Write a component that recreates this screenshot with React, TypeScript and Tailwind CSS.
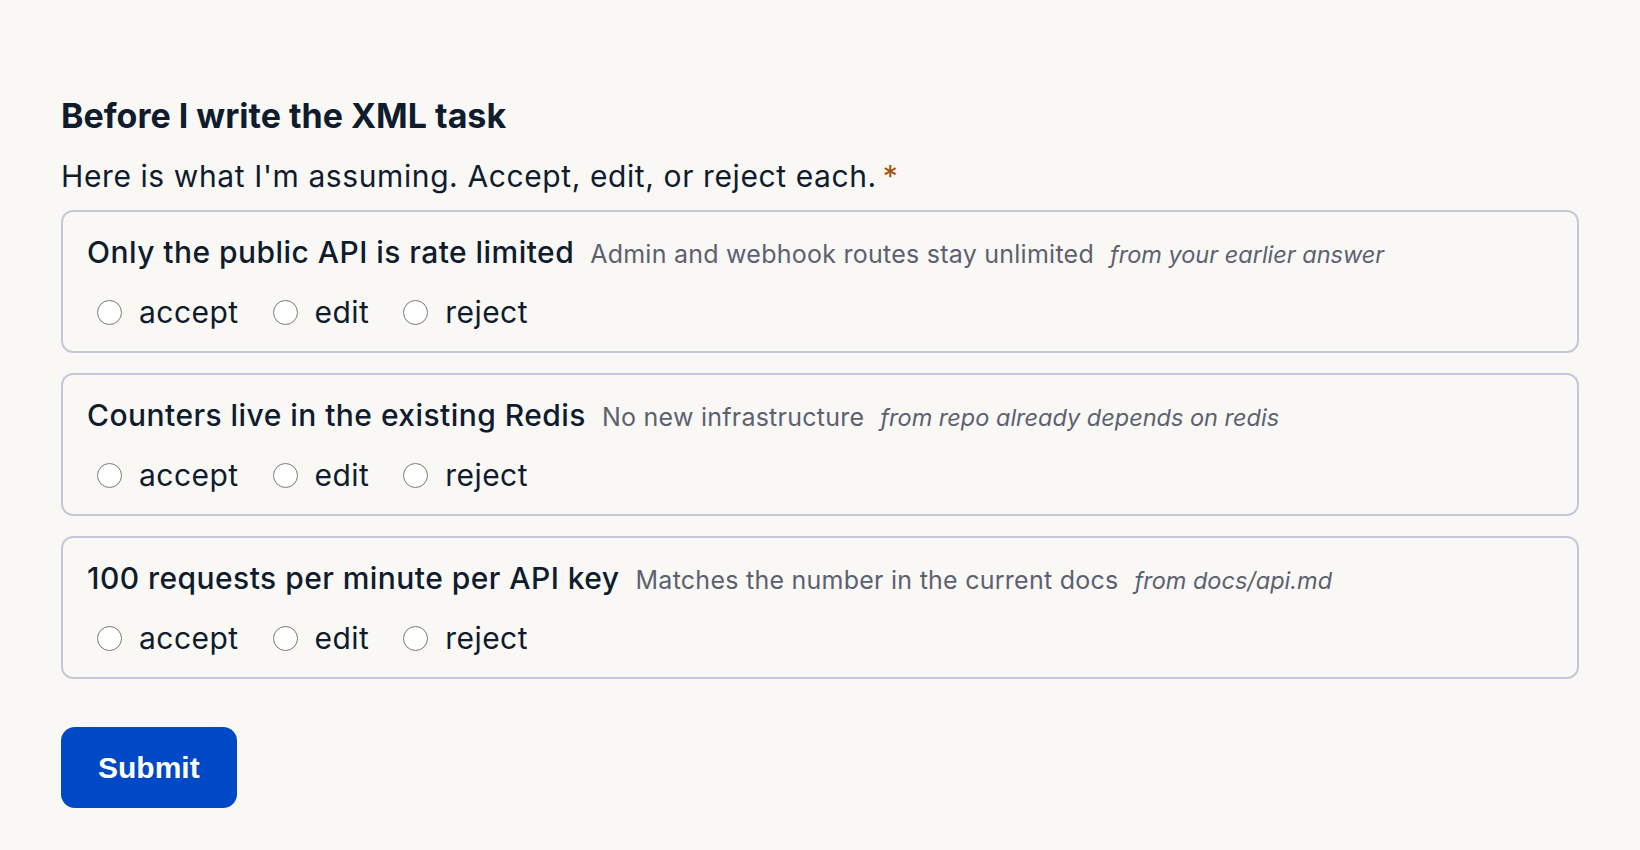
import { useState } from 'react'

type Choice = 'accept' | 'edit' | 'reject'

const ASSUMPTIONS = [
  {
    id: 'scope',
    title: 'Only the public API is rate limited',
    detail: 'Admin and webhook routes stay unlimited',
    source: 'from your earlier answer',
  },
  {
    id: 'store',
    title: 'Counters live in the existing Redis',
    detail: 'No new infrastructure',
    source: 'from repo already depends on redis',
  },
  {
    id: 'limit',
    title: '100 requests per minute per API key',
    detail: 'Matches the number in the current docs',
    source: 'from docs/api.md',
  },
]

const CHOICES: Choice[] = ['accept', 'edit', 'reject']

function Radio({ checked }: { checked: boolean }) {
  return (
    <span className="flex h-[25px] w-[25px] shrink-0 items-center justify-center rounded-full border-[1.5px] border-[#7a7a7a] bg-white">
      {checked && <span className="h-[13px] w-[13px] rounded-full bg-[#0049c6]" />}
    </span>
  )
}

export default function App() {
  const [answers, setAnswers] = useState<Record<string, Choice | undefined>>({})

  return (
    <div
      className="min-h-screen bg-[#f9f8f5] pl-[61px] pr-[61px] pt-[96px] text-[#0f1c2e]"
      style={{ fontFamily: 'Inter, "Noto Sans", sans-serif' }}
    >
      <h2 className="text-[34px] font-bold leading-[40px]">Before I write the XML task</h2>
      <p className="mt-[22px] text-[30px] leading-[36px] tracking-[0.02em]">
        Here is what I'm assuming. Accept, edit, or reject each.
        <span className="ml-[6px] text-[#a8520f]">*</span>
      </p>

      <div className="mt-[16px] flex flex-col gap-[20px]">
        {ASSUMPTIONS.map((a) => (
          <div
            key={a.id}
            className="rounded-[12px] border-2 border-[#c6c8d9] px-[24px] pb-[21px] pt-[22px]"
          >
            <div className="flex h-[36px] items-baseline gap-4 whitespace-nowrap">
              <span className="text-[30px] font-medium leading-[36px] tracking-[0.015em]">{a.title}</span>
              <span className="text-[25px] leading-[36px] tracking-[0.01em] text-[#5c6171]">{a.detail}</span>
              <span className="text-[23.5px] italic leading-[36px] text-[#5c6171]">{a.source}</span>
            </div>
            <div className="mt-[24px] flex items-center gap-[24px]">
              {CHOICES.map((c) => (
                <label
                  key={c}
                  className="ml-[10px] flex cursor-pointer items-center gap-[17px] text-[30px] leading-[36px] tracking-[0.015em]"
                  onClick={() => setAnswers((prev) => ({ ...prev, [a.id]: c }))}
                >
                  <Radio checked={answers[a.id] === c} />
                  {c}
                </label>
              ))}
            </div>
          </div>
        ))}
      </div>

      <button
        className="mt-[48px] h-[81px] rounded-[14px] bg-[#0049c6] px-[37px] text-[30px] font-bold text-white"
        style={{ fontFamily: '"Liberation Sans", Arial, sans-serif' }}
      >
        Submit
      </button>
    </div>
  )
}
